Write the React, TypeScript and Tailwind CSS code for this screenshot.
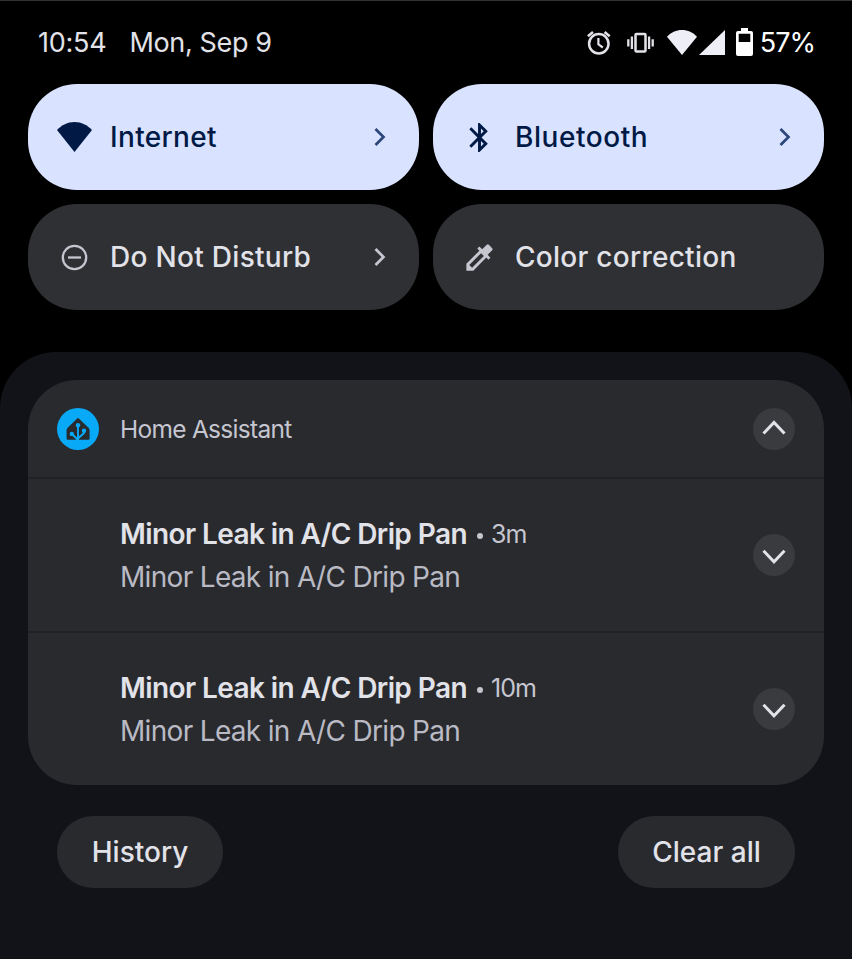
import type { ReactNode } from "react";
import { MdBluetooth, MdColorize } from "react-icons/md";

function WifiIcon({ className }: { className: string }) {
  return (
    <svg viewBox="0 0 35 30" className={className} fill="currentColor" preserveAspectRatio="none">
      <path d="M17.5 30 0 8C4.700 3 10.600 0 17.500 0S30.300 3 35 8Z" />
    </svg>
  );
}

function AlarmIcon({ className }: { className: string }) {
  return (
    <svg viewBox="0 0 28 28" className={className} fill="none" stroke="currentColor" strokeWidth="2.500">
      <circle cx="13.800" cy="14.800" r="9.700" />
      <path d="M13.400 9V15.300L17.800 18.500" strokeWidth="2.200" />
      <path d="M2.900 7.300 8 3M19.600 3 24.700 7.300" />
    </svg>
  );
}

function VibrateIcon({ className }: { className: string }) {
  return (
    <svg viewBox="0 0 27 28" className={className} fill="none" stroke="currentColor" strokeWidth="2.300">
      <rect x="8.500" y="5" width="10" height="17.600" rx="1" strokeWidth="2.500" />
      <path d="M1.300 10.200V17.400M4.900 7.500V20M22.100 7.500V20M25.700 10.200V17.400" />
    </svg>
  );
}

function SideChevron({ className }: { className: string }) {
  return (
    <svg viewBox="0 0 12 20" className={className} fill="none" stroke="currentColor" strokeWidth="2.7">
      <path d="M1.500 2 9.500 10 1.500 18" />
    </svg>
  );
}

function DndIcon() {
  return (
    <svg viewBox="0 0 35 35" className="size-[35px]" fill="none" stroke="currentColor" strokeWidth="2.300">
      <circle cx="17.500" cy="17.500" r="11.700" />
      <path d="M11 17.500h13" />
    </svg>
  );
}

function HomeAssistantIcon() {
  return (
    <svg viewBox="0 0 42 42" className="size-[42px] shrink-0">
      <circle cx="21" cy="21" r="21" fill="#08a9f7" />
      <path
        d="M21 9.700 31.500 19.700Q32.600 20.800 32.600 22.300V30.600Q32.600 31.800 31.400 31.800H10.800Q9.600 31.800 9.600 30.600V22.300Q9.600 20.800 10.700 19.700Z"
        fill="#292a2e"
      />
      <g stroke="#08a9f7" strokeWidth="1.900" fill="none">
        <path d="M21 17V32.500M15 26 21 32M27 23V25L21 30.500" />
      </g>
      <g fill="#08a9f7">
        <circle cx="21" cy="17.300" r="2.200" />
        <circle cx="14.800" cy="25.900" r="2.200" />
        <circle cx="27" cy="22.800" r="2.200" />
      </g>
    </svg>
  );
}

function ExpandButton({ up = false }: { up?: boolean }) {
  return (
    <button className="grid size-[42px] shrink-0 place-items-center rounded-full bg-[#3a3b3f] text-[#e2e2e9]">
      <svg viewBox="0 0 42 42" className="size-[42px]" fill="none" stroke="currentColor" strokeWidth="3">
        <path d={up ? "M10.500 25.500 21 14.500 31.500 25.500" : "M10.500 16.800 21 27.800 31.500 16.800"} />
      </svg>
    </button>
  );
}

type TileProps = { icon: ReactNode; label: string; spacing: string; active?: boolean; chevron?: boolean };

function Tile({ icon, label, spacing, active = false, chevron = false }: TileProps) {
  return (
    <button
      className={`flex h-[106px] items-center rounded-[49px] pr-[33px] pl-[29px] text-left ${
        active ? "bg-[#d9e2ff] text-[#001945]" : "bg-[#2f3034] text-[#e2e2e9]"
      }`}
    >
      <span className={`grid size-[35px] place-items-center ${active ? "" : "text-[#c5c6d0]"}`}>{icon}</span>
      <span className={`ml-[18px] flex-1 text-[28px] leading-9 font-medium whitespace-nowrap ${spacing}`}>{label}</span>
      {chevron && <SideChevron className={`h-5 w-3 ${active ? "text-[#2b4678]" : "text-[#c5c6d0]"}`} />}
    </button>
  );
}

function Notification({ age }: { age: string }) {
  return (
    <div className="flex h-[154px] items-center border-t-2 border-[#212226] pr-[29px] pl-[92px]">
      <div className="flex-1 whitespace-nowrap">
        <div className="flex h-[43px] items-center text-[#c5c6d0]">
          <span className="text-[28px] font-semibold tracking-[-0.590px] text-[#e2e2e9]">Minor Leak in A/C Drip Pan</span>
          <span className="mt-[5px] mr-2 ml-[10px] size-[6px] rounded-full bg-[#c5c6d0]" />
          <span className="mt-[3px] text-[25px] tracking-[-1px]">{age}</span>
        </div>
        <div className="flex h-[43px] items-center text-[28px] tracking-[-0.680px] text-[#b9bac4]">
          Minor Leak in A/C Drip Pan
        </div>
      </div>
      <ExpandButton />
    </div>
  );
}

export default function App() {
  return (
    <div className="flex h-[959px] w-[852px] flex-col overflow-hidden border-t border-[#333333] bg-black font-['Inter',sans-serif]">
      <header className="flex h-[83px] shrink-0 items-center pr-[37px] pl-[38px] text-[27px] text-[#e2e2e9]">
        <span className="pt-[2px] tracking-[-0.250px]">10:54</span>
        <span className="ml-[23px] flex-1 pt-[2px] tracking-[-0.350px]">Mon, Sep 9</span>
        <AlarmIcon className="h-7 w-7" />
        <VibrateIcon className="ml-[14px] h-7 w-[27px]" />
        <WifiIcon className="ml-[13px] h-[25px] w-[30px] text-[#eeeef6]" />
        <svg viewBox="0 0 26 25" className="ml-[2px] h-[25px] w-[26px] fill-[#eeeef6]">
          <path d="M26 0V25H0Z" />
        </svg>
        <svg viewBox="0 0 17 28" className="mb-[2px] ml-[11px] h-7 w-[17px] fill-white">
          <path
            fillRule="evenodd"
            d="M5 0H12V3H15Q17 3 17 5V26Q17 28 15 28H2Q0 28 0 26V5Q0 3 2 3H5ZM2.700 5.700V14H14.300V5.700Z"
          />
        </svg>
        <span className="ml-[7px] pt-[2px] tracking-[-1px] text-white">57%</span>
      </header>

      <section className="grid shrink-0 grid-cols-2 gap-[14px] px-7">
        <Tile active chevron label="Internet" spacing="tracking-[0.350px]" icon={<WifiIcon className="h-[30px] w-[35px]" />} />
        <Tile active chevron label="Bluetooth" spacing="tracking-[0.550px]" icon={<MdBluetooth className="size-[35px]" />} />
        <Tile chevron label="Do Not Disturb" spacing="tracking-[0.300px]" icon={<DndIcon />} />
        <Tile label="Color correction" spacing="tracking-[0.270px]" icon={<MdColorize className="size-[35px]" />} />
      </section>

      <main className="mt-[42px] flex-1 rounded-t-[56px] bg-[#121318] px-7 pt-7">
        <section className="overflow-hidden rounded-[49px] bg-[#292a2e]">
          <div className="flex h-[97px] items-center pr-[29px] pl-[29px]">
            <HomeAssistantIcon />
            <span className="ml-[21px] flex-1 pt-[2px] text-[24.500px] tracking-[-0.720px] text-[#c5c6d0]">Home Assistant</span>
            <ExpandButton up />
          </div>
          <Notification age="3m" />
          <Notification age="10m" />
        </section>
        <footer className="mt-[31px] flex justify-between px-[29px] text-[28px] font-medium text-[#e2e2e9]">
          <button className="h-[72px] w-[166px] rounded-full bg-[#292a2e]">History</button>
          <button className="h-[72px] w-[177px] rounded-full bg-[#292a2e]">Clear all</button>
        </footer>
      </main>
    </div>
  );
}
